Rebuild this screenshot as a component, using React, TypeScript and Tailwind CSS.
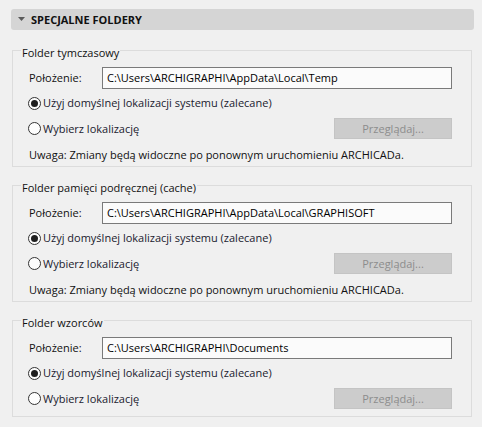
import React from "react";

function Radio({ checked, label }: { checked?: boolean; label: string }) {
  return (
    <div className="flex items-center h-[16px]">
      <span className="w-[13px] h-[13px] rounded-full border border-[#333333] bg-[#fdfdfd] flex items-center justify-center shrink-0">
        {checked && <span className="w-[7px] h-[7px] rounded-full bg-[#1e1e1e]" />}
      </span>
      <span className="ml-[2px] text-[#1a1a2e]">{label}</span>
    </div>
  );
}

function Group({
  title,
  path,
  note,
  last,
}: {
  title: string;
  path: string;
  note: boolean;
  last?: boolean;
}) {
  return (
    <fieldset
      className={
        "ml-[1px] w-[460px] border border-[#dcdcdc] " +
        (note ? "pb-[3px] " : "pb-[7px] ") +
        (last ? "" : "mb-[7px]")
      }
    >
      <legend className="ml-[8px] px-[1px] h-[22px] pt-[6px] leading-[16px] text-[#111111]">{title}</legend>
      <div className="pl-[15px] pr-[19px] flex flex-col">
        <div className="flex items-center mt-[6px]">
          <span className="w-[74px] pl-[1px] text-[#111111]">Położenie:</span>
          <div className="w-[350px] h-[22px] border border-[#7a7a7a] bg-[#fbfbfb] flex items-center pl-[4px] text-black">
            {path}
          </div>
        </div>
        <div className="mt-[6px]">
          <Radio checked label="Użyj domyślnej lokalizacji systemu (zalecane)" />
        </div>
        <div className="mt-[7px] flex items-center justify-between h-[21px]">
          <Radio label="Wybierz lokalizację" />
          <div className="w-[118px] h-[21px] bg-[#cccccc] border border-[#c4c4c4] flex items-center justify-center text-[#8c8c8c]">
            Przeglądaj...
          </div>
        </div>
        {note && (
          <div className="mt-[8px] h-[16px] leading-[16px] pl-[1px] text-[#111111]">
            Uwaga: Zmiany będą widoczne po ponownym uruchomieniu ARCHICADa.
          </div>
        )}
      </div>
    </fieldset>
  );
}

export default function App() {
  return (
    <div
      className="w-[482px] h-[427px] bg-[#f0f0f0] pt-[9px] pl-[11px] text-[11px] leading-[16px] overflow-hidden"
      style={{ fontFamily: '"Open Sans", "Noto Sans", sans-serif' }}
    >
      <div className="w-[463px] h-[21px] rounded-[3px] bg-[#d5d5d5] flex items-center pl-[7px]">
        <svg width="7" height="5" viewBox="0 0 7 5" className="shrink-0">
          <polygon points="0,0 7,0 3.5,4" fill="#5a5a5a" />
        </svg>
        <span className="ml-[6px] font-bold text-[#111111]">SPECJALNE FOLDERY</span>
      </div>
      <div className="mt-[9px]">
        <Group title="Folder tymczasowy" path="C:\Users\ARCHIGRAPHI\AppData\Local\Temp" note />
        <Group title="Folder pamięci podręcznej (cache)" path="C:\Users\ARCHIGRAPHI\AppData\Local\GRAPHISOFT" note />
        <Group title="Folder wzorców" path="C:\Users\ARCHIGRAPHI\Documents" note={false} last />
      </div>
    </div>
  );
}
